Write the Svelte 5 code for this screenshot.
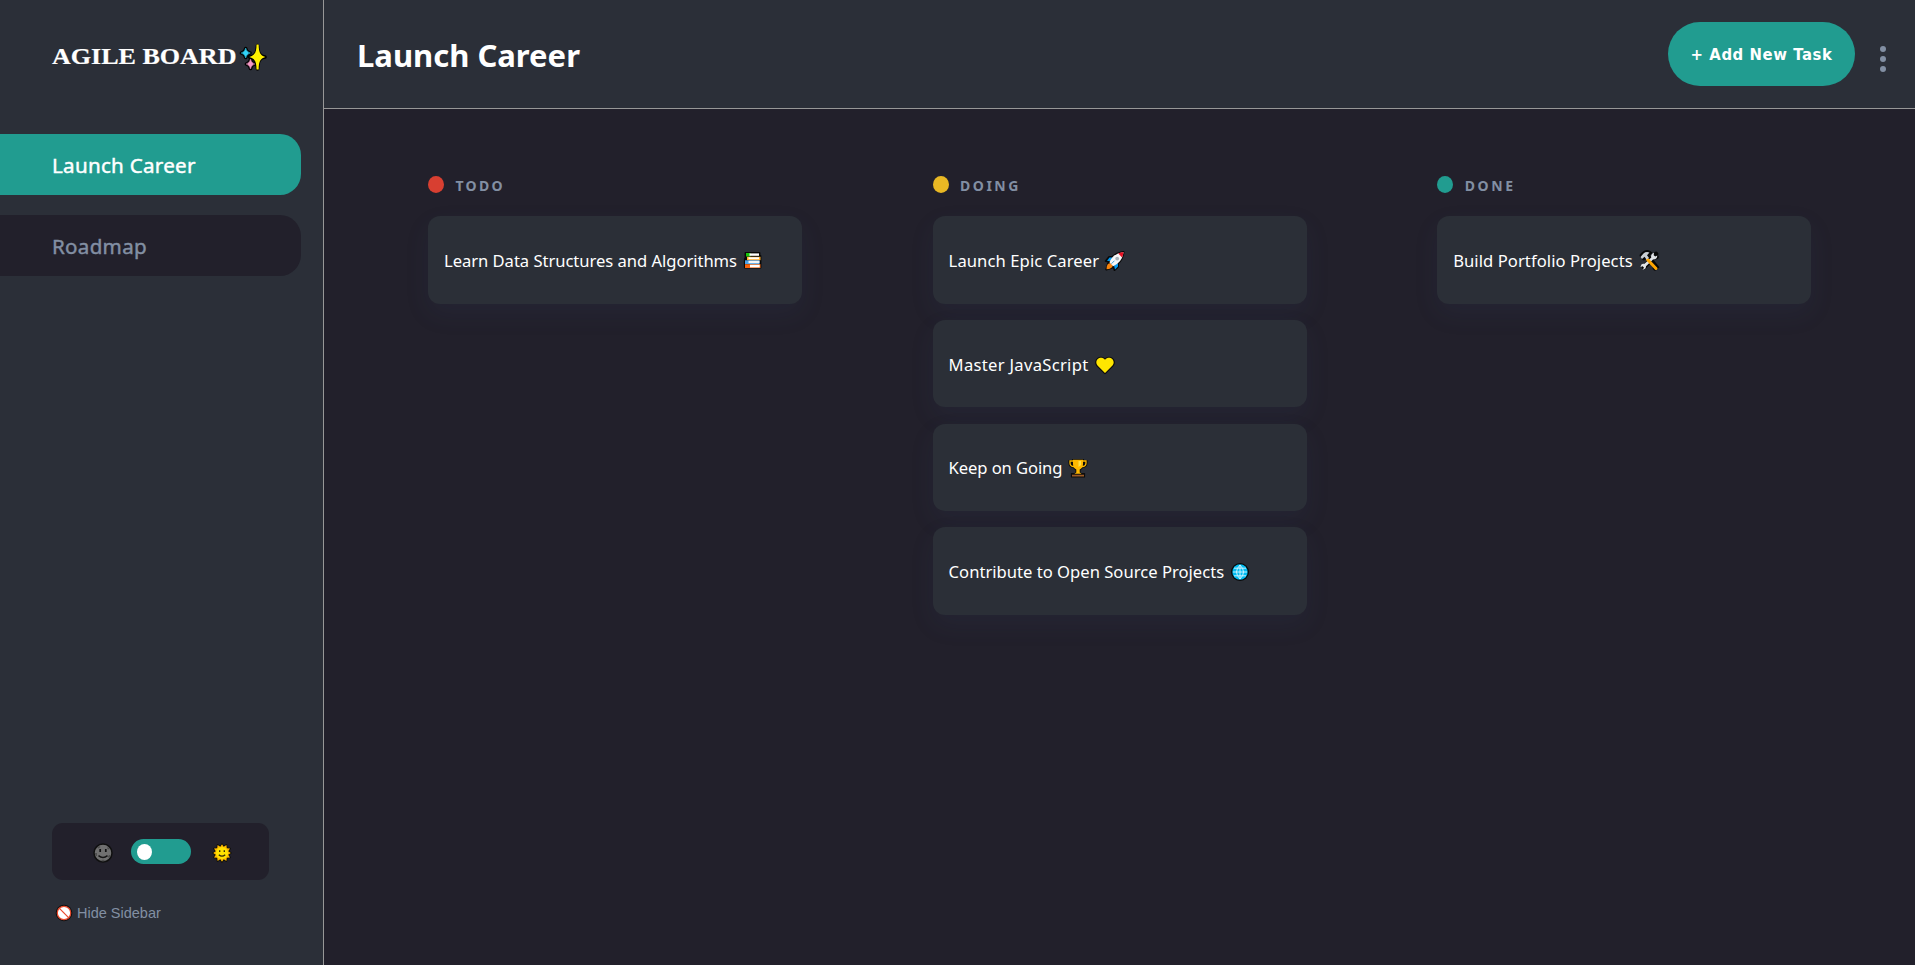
<script>
  let active = $state('Launch Career');

  const boards = [
    { name: 'Launch Career', spacing: 0.28 },
    { name: 'Roadmap', spacing: 0.28 }
  ];

  const columns = [
    {
      name: 'TODO', color: '#d83f31', spacing: 2.3,
      tasks: [{ text: 'Learn Data Structures and Algorithms', icon: 'books', spacing: -0.04 }]
    },
    {
      name: 'DOING', color: '#e9b824', spacing: 2.5,
      tasks: [
        { text: 'Launch Epic Career', icon: 'rocket', spacing: 0.09 },
        { text: 'Master JavaScript', icon: 'heart', spacing: 0.3 },
        { text: 'Keep on Going', icon: 'trophy', spacing: -0.09 },
        { text: 'Contribute to Open Source Projects', icon: 'globe', spacing: 0.01 }
      ]
    },
    {
      name: 'DONE', color: '#219c90', spacing: 2.6,
      tasks: [{ text: 'Build Portfolio Projects', icon: 'tools', spacing: 0.07 }]
    }
  ];
</script>

<div class="app">
  <aside>
    <div class="logo">
      <span>AGILE BOARD</span>
      <svg width="28" height="28" viewBox="0 0 28 28">
        <path d="M18.500 2.500C19 10 20.500 13.500 26 14C20.500 14.500 19 18 18.500 26C18 18 16.500 14.500 10.500 14C16.500 13.500 18 10 18.500 2.500ZM6.700 5.500Q7.200 9.500 11 10Q7.200 10.500 6.700 14.500Q6.200 10.500 2.500 10Q6.200 9.500 6.700 5.500ZM11.500 16.500Q12 20.500 15.500 21Q12 21.500 11.500 25.500Q11 21.500 7.500 21Q11 20.500 11.500 16.500Z" fill="none" stroke="#000" stroke-width="3.600" stroke-linejoin="round" />
        <path d="M17.500 1.500h2.200C19.700 9 21 12.500 26.300 14C21 15.500 19.700 19 19.700 26.500h-2.200C17.500 19 16 15.500 10.300 14C16 12.500 17.500 9 17.500 1.500Z" fill="#fff100" />
        <path d="M6.700 5Q7.500 9.200 11.300 10Q7.500 10.800 6.700 15Q6 10.800 2.200 10Q6 9.200 6.700 5Z" fill="#31d2f7" stroke="#31d2f7" stroke-width=".5" />
        <path d="M11.500 16Q12.300 20.200 15.800 21Q12.300 21.800 11.500 26Q10.700 21.800 7.200 21Q10.700 20.200 11.500 16Z" fill="#f59ac6" stroke="#f59ac6" stroke-width=".5" />
      </svg>
    </div>

    <nav>
      {#each boards as board}
        <button class="board" class:active={active === board.name} onclick={() => (active = board.name)}>
          <span style="letter-spacing: {board.spacing}px">{board.name}</span>
        </button>
      {/each}
    </nav>

    <div class="theme">
      <svg class="moon" width="20" height="20" viewBox="0 0 20 20">
        <circle cx="10" cy="10" r="9" fill="#707070" stroke="#101010" stroke-width="1.500" />
        <path d="M4 4.500l2-1.500 1.500 1-2 1.500zM15 4l1.700 2-1.700.5-1-1.500zM2 10h2v3H2.500zM16 12h1.800l-1.500 3-1.500-1zM8.500 16.800h3v1.400h-3z" fill="#4e4e4e" />
        <path d="M7.200 6v3M12.800 6v3" stroke="#111" stroke-width="1.700" />
        <path d="M5.500 12.600Q10 16.500 14.500 12.600" fill="none" stroke="#151515" stroke-width="1.400" />
      </svg>
      <span class="switch"><i></i></span>
      <svg class="sun" width="20" height="20" viewBox="0 0 20 20">
        <path d="M10 1.200L11.700 3.800L14.400 2L14.800 5.200L18 5.600L16.200 8.300L18.800 10L16.200 11.700L18 14.400L14.800 14.800L14.400 18L11.700 16.200L10 18.800L8.300 16.200L5.600 18L5.200 14.800L2 14.400L3.800 11.700L1.200 10L3.800 8.300L2 5.600L5.200 5.200L5.600 2L8.300 3.800Z" fill="#ffb900" stroke="#0b0b08" stroke-width="1.600" stroke-linejoin="round" paint-order="stroke" />
        <circle cx="10" cy="10" r="6" fill="#ffe200" />
        <path d="M7.700 7.200v1.800M12.300 7.200v1.800M6.800 11.700Q10 14.600 13.200 11.700" fill="none" stroke="#30240a" stroke-width="1.300" />
      </svg>
    </div>

    <button class="hide">
      <svg width="18" height="18" viewBox="0 0 18 18">
        <circle cx="9" cy="9" r="8.300" fill="#101010" />
        <circle cx="9" cy="9" r="6.700" fill="#fff" stroke="#e8492c" stroke-width="1.200" />
        <path d="M4.200 4.200l9.600 9.600" stroke="#e8492c" stroke-width="1.200" />
      </svg>
      <span>Hide Sidebar</span>
    </button>
  </aside>

  <main>
    <header>
      <h1>{active}</h1>
      <button class="add">+ Add New Task</button>
      <svg class="more" width="6" height="26" viewBox="0 0 6 26" fill="#828fa3">
        <circle cx="3" cy="3" r="3" /><circle cx="3" cy="13" r="3" /><circle cx="3" cy="23" r="3" />
      </svg>
    </header>

    <section class="columns">
      {#each columns as column}
        <div class="column">
          <h2>
            <i style="background: {column.color}"></i>
            <span style="letter-spacing: {column.spacing}px">{column.name}</span>
          </h2>
          {#each column.tasks as task}
            <article>
              <span style="letter-spacing: {task.spacing}px">{task.text}</span>
              <svg width="22" height="22" viewBox="0 0 22 22">
                {#if task.icon === 'books'}
                  <path d="M3.500 3h14v3h1v11.500H2.800V9l.7-1z" fill="#080808" stroke="#080808" stroke-width="1.800" stroke-linejoin="round" />
                  <path d="M4 3h4.500v3.500H4z" fill="#16c60c" /><path d="M7.500 3.400h9.500v2.400H7.500z" fill="#fff" />
                  <path d="M5 6.800h13.500v3.400H5z" fill="#ffb02e" /><path d="M6.500 7.300h10.500V9.200H6.500z" fill="#fff" />
                  <path d="M3 10.300h14.500V14H3z" fill="#4ba3e8" /><path d="M6.500 10.700h11v2.500h-11z" fill="#f3f5f6" />
                  <path d="M3 14.200h15.500V18H3z" fill="#f7630c" /><path d="M8 14.700h9.700v2.700H8z" fill="#fff" />
                {:else if task.icon === 'rocket'}
                  <path d="M19.500 2Q12 3 8.500 7H5L1.800 11l3 .5-2.500 8 7.500-2.500.7 3 3.500-3.200v-3.500Q18.500 9.500 19.500 2Z" fill="#080808" stroke="#080808" stroke-width="2" stroke-linejoin="round" />
                  <path d="M8.500 7.500H5.500L3 10.700l4 .8zM14 13.300v3.200l-3 3-1-4z" fill="#0099f0" />
                  <path d="M6.500 13Q2.500 13 2.500 19.300Q8.500 19 8.800 15.300Z" fill="#f7820c" />
                  <path d="M19.500 2Q8.500 3.500 5.500 12.500L9.200 16.300Q18.500 12 19.500 2Z" fill="#f7f7f7" />
                  <path d="M19.500 2Q16.500 2.300 14.300 3.500l3.700 4Q19.300 5 19.500 2Z" fill="#e81224" />
                  <circle cx="13.200" cy="8.600" r="1.900" fill="#a8b3ba" /><path d="M7.500 13.700l3-3" stroke="#3f9fd8" />
                {:else if task.icon === 'heart'}
                  <path d="M11 19L3.500 11.500C-.5 6.500 6.500.8 11 5.700C15.500.8 22.500 6.500 18.500 11.500Z" fill="#ffe600" stroke="#0b0b0b" stroke-width="2.400" stroke-linejoin="round" paint-order="stroke" />
                {:else if task.icon === 'trophy'}
                  <path d="M5.500 2.500h11v1H20v2q0 4.500-4.500 5l-2.500 2.500v3.500h4.500V20h-13v-3.500H9V13l-2.500-2.500Q2 10 2 5.500v-2h3.500z" fill="#0b0b0b" stroke="#0b0b0b" stroke-width="1.200" stroke-linejoin="round" />
                  <path d="M6 4H3v2q0 3.500 4 3.500M16 4h3v2q0 3.500-4 3.500" fill="none" stroke="#ffb900" stroke-width="1.300" />
                  <path d="M6 2.800h10V7q0 4-3.300 5.500v3l1.800 1.300h-7l1.800-1.300v-3Q6 11 6 7z" fill="#ffb900" />
                  <path d="M11.500 4h2.500v4l-2.500 2z" fill="#ffdf45" /><path d="M5 17.700h12v1.800H5z" fill="#9a5a27" />
                {:else if task.icon === 'globe'}
                  <circle cx="11" cy="11" r="9" fill="#080808" /><circle cx="11" cy="11" r="7.700" fill="#00bcf2" />
                  <path d="M4 11h14M5 7.200h12M5 14.800h12M11 4v14M11 4Q4 11 11 18M11 4Q18 11 11 18" fill="none" stroke="#d9f6ff" stroke-width=".9" />
                {:else}
                  <path d="M4 5.500Q8 1 11 3L8.800 5.200L18.300 17l-1.300 1.200M4 5.500l2 2.500M18 4l-2.500 2.200M18.500 7l-3 .5L6 17" fill="none" stroke="#080808" stroke-width="4.600" stroke-linecap="round" />
                  <path d="M14.500 3.500l1.500-.8-.3 2.500 1.600 1.300 2-1q0 4-4.300 4L8 16.300Q8.200 19.500 4.500 19.700L6 17.800 4.700 16.200 2.500 17Q3 13 6.500 13.800L13.300 7.500Q12.500 5 14.500 3.500Z" fill="#e1e4e7" />
                  <path d="M9.500 9.500l8.500 9" stroke="#ffa500" stroke-width="3" stroke-linecap="round" />
                  <path d="M2.500 7L5.500 3.500Q8 1.200 11.500 2.500L9 5.200 11 8 8.500 9.500 6.500 6.700 4 9z" fill="#c9ced2" />
                {/if}
              </svg>
            </article>
          {/each}
        </div>
      {/each}
    </section>
  </main>
</div>

<style>
  :global(body) { background: #22202b; }
  .app { display: flex; width: 100%; height: 965px; overflow: hidden; background: #22202b; font-family: 'Noto Sans', sans-serif; color: #fff; }
  button { border: 0; margin: 0; background: none; font: inherit; color: inherit; cursor: pointer; text-align: left; }
  svg { display: block; flex: none; }
  aside { box-sizing: border-box; width: 324px; flex: none; display: flex; flex-direction: column; align-items: flex-start; background: #2b2f38; border-right: 1px solid #979797; }
  .logo { display: flex; height: 134px; box-sizing: border-box; padding: 41px 0 0 52px; font: bold 24px/30px 'Liberation Serif', serif; }
  .logo span { width: 185px; white-space: nowrap; transform: scaleX(1.085); transform-origin: left; -webkit-text-stroke: .2px currentColor; }
  .logo svg { margin: 2px 0 0 2px; }
  nav { display: flex; flex-direction: column; gap: 20px; flex: 1; }
  .board { width: 301px; height: 61px; padding: 1px 0 0 52px; border-radius: 0 21px 21px 0; background: #22202b; color: #828fa3; font-size: 20.6px; line-height: 28px; -webkit-text-stroke: .45px currentColor; }
  .board.active { background: #219c90; color: #fff; }
  .theme { box-sizing: border-box; width: 217px; height: 57px; margin-left: 52px; padding-left: 41px; display: flex; align-items: center; border-radius: 11px; background: #22202b; }
  .moon, .sun { margin-top: 2px; }
  .switch { box-sizing: border-box; width: 60px; height: 25px; margin: 0 21px 0 18px; padding: 5px 6px; border-radius: 13px; background: #219c90; }
  .switch i { display: block; width: 15px; height: 16px; border-radius: 50%; background: #fff; }
  .hide { display: flex; align-items: center; gap: 4px; height: 20px; margin: 23px 0 42px 55px; padding: 0; color: #828fa3; font: 14.5px/20px 'Liberation Sans', sans-serif; }
  main { flex: 1; min-width: 0; }
  header { box-sizing: border-box; height: 109px; display: flex; align-items: center; padding: 0 29px 0 33px; background: #2b2f38; border-bottom: 1px solid #979797; }
  h1 { flex: 1; margin: 1px 0 0; font-size: 31px; line-height: 42px; font-weight: 700; }
  .add { width: 187px; height: 64px; padding: 1px 0 0; border-radius: 32px; background: #219c90; font: bold 16.5px/22px 'DejaVu Sans Condensed', 'DejaVu Sans', sans-serif; letter-spacing: .6px; text-align: center; white-space: nowrap; }
  .more { margin: 10px 0 0 25px; }
  .columns { display: grid; grid-template-columns: repeat(3, 374px); column-gap: 130.6px; padding: 67px 0 0 104px; }
  .column { display: flex; flex-direction: column; gap: 16.2px; }
  h2 { display: flex; gap: 11.500px; height: 24.2px; margin: 0; font-size: 14px; line-height: 20px; font-weight: 700; color: #828fa3; }
  h2 i { width: 16px; height: 17px; border-radius: 50%; }
  article { box-sizing: border-box; height: 87.4px; display: flex; align-items: center; gap: 5px; padding: 2px 16px 0; border-radius: 12px; background: #2b2f37; box-shadow: 0 10px 24px rgba(54, 78, 126, .1); font-size: 16.6px; line-height: 24px; white-space: nowrap; }
</style>
